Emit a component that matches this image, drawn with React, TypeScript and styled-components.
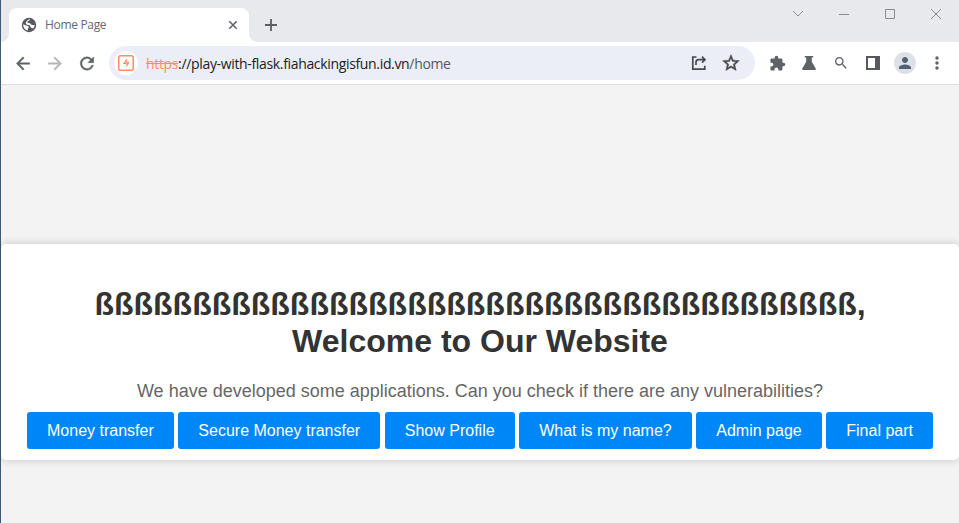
import React from 'react';
import styled, { createGlobalStyle } from 'styled-components';
import { MdArrowBack, MdArrowForward, MdRefresh, MdExtension, MdSearch, MdPerson, MdMoreVert, MdStarBorder } from 'react-icons/md';

const GlobalStyle = createGlobalStyle`
  * { box-sizing: border-box; }
  body { margin: 0; overflow: hidden; }
`;

const Window = styled.div`
  width: 100vw;
  height: 100vh;
  display: flex;
  flex-direction: column;
  border-left: 1px solid #3c5a78;
  background: #f3f3f3;
  font-family: 'Open Sans', 'Noto Sans', sans-serif;
`;

const TabStrip = styled.div`
  height: 42px;
  flex: none;
  display: flex;
  align-items: flex-end;
  padding-left: 8px;
  background: #e8e9ed;
`;

const Tab = styled.div`
  position: relative;
  width: 240px;
  height: 34px;
  display: flex;
  align-items: center;
  padding: 0 11px 0 12px;
  border-radius: 8px 8px 0 0;
  background: #fff;
  color: #5f6368;
  &::before, &::after {
    content: '';
    position: absolute;
    bottom: 0;
    width: 8px;
    height: 8px;
  }
  &::before { left: -8px; background: radial-gradient(circle at 0 0, transparent 7.5px, #fff 8px); }
  &::after { right: -8px; background: radial-gradient(circle at 100% 0, transparent 7.5px, #fff 8px); }
`;

const TabTitle = styled.span`
  flex: 1;
  margin-left: 8px;
  font-size: 12px;
  line-height: 16px;
  letter-spacing: -0.32px;
  color: #66696e;
`;

const NewTab = styled.div`
  display: flex;
  margin: 0 auto 11px 15px;
  color: #5a5d61;
`;

const WindowControls = styled.div`
  align-self: flex-start;
  display: flex;
  height: 28px;
  align-items: center;
  color: #888b90;
`;

const WindowButton = styled.div`
  width: 46px;
  display: flex;
  justify-content: center;
`;

const Toolbar = styled.div`
  height: 43px;
  flex: none;
  display: flex;
  align-items: center;
  padding-left: 12px;
  background: #fff;
  border-bottom: 1px solid #dadbdd;
`;

const ToolButton = styled.div<{ $color?: string; $bold?: boolean }>`
  width: 20px;
  height: 20px;
  margin-right: 12px;
  display: flex;
  flex: none;
  align-items: center;
  justify-content: center;
  color: ${p => p.$color ?? '#5f6368'};
  path:last-child { ${p => p.$bold ? 'stroke: currentColor; stroke-width: 0.5px;' : ''} }
`;

const AddressBar = styled.div`
  width: 646px;
  height: 34px;
  display: flex;
  align-items: center;
  margin-right: 12px;
  padding: 0 14px 0 5px;
  border-radius: 17px;
  background: #ebeef6;
`;

const SiteBadge = styled.div`
  width: 24px;
  height: 24px;
  display: flex;
  align-items: center;
  justify-content: center;
  border-radius: 50%;
  background: #fff;
`;

const Url = styled.div`
  flex: 1;
  margin-left: 8px;
  padding-top: 1px;
  font-size: 14px;
  line-height: 20px;
  letter-spacing: -0.34px;
  white-space: nowrap;
  color: #202124;
`;

const Scheme = styled.span`
  color: #ff8c6c;
  text-decoration: line-through;
`;

const UrlPath = styled.span`
  color: #55585d;
`;

const AddressActions = styled.div`
  display: flex;
  gap: 12px;
  color: #48494c;
  svg:last-child path:last-child { stroke: currentColor; stroke-width: 0.6px; }
`;

const Avatar = styled.div`
  width: 22px;
  height: 22px;
  margin: 0 11px 0 -1px;
  display: flex;
  align-items: center;
  justify-content: center;
  border-radius: 50%;
  background: #dde1e7;
  color: #526073;
`;

const Viewport = styled.main`
  flex: 1;
  min-height: 0;
  padding-top: 159px;
  font-family: 'Liberation Sans', Arial, sans-serif;
`;

const Card = styled.section`
  height: 216px;
  padding: 42px 20px 0;
  border-radius: 5px;
  background: #fff;
  box-shadow: 0 0 10px rgba(0, 0, 0, 0.2);
  text-align: center;
`;

const Heading = styled.h1`
  margin: 0 0 21px;
  font-size: 32px;
  line-height: 37px;
  color: #333;
`;

const Intro = styled.p`
  margin: 0 0 10px;
  font-size: 18px;
  line-height: 21px;
  color: #666;
`;

const Links = styled.nav`
  display: flex;
  justify-content: center;
  gap: 4.6px;
`;

const LinkButton = styled.a`
  padding: 10px 20px 9px;
  border-radius: 3px;
  background: #0087f7;
  color: #fff;
  font-size: 16px;
  line-height: 18px;
  white-space: nowrap;
`;

const links = ['Money transfer', 'Secure Money transfer', 'Show Profile', 'What is my name?', 'Admin page', 'Final part'];
const name = 'ß'.repeat(39);

const GlobeIcon = () => (
  <svg width="16" height="16" viewBox="0 0 16 16">
    <circle cx="8" cy="8" r="7.2" fill="#55585d" />
    <path d="M2.2 7.2 5 8.6c1.1.3 2.3.2 2.7 1.2.3 1-.7 1.2-.9 2.1v1.5C4 13 2.1 10.6 2.2 7.2ZM9 2.2c-.1 1-.8 1.6-1.7 1.7C6.2 4 6 5 6.6 5.6c.7.6 2 .2 2.6 1 .5.9 1.1 1.5 2.1 1.4.8-.1 1.4.1 2.3.3-.1 1.2-.6 2.3-1.3 3.1-.7-.5-1.9-.3-2.5-1-.6-.8-.3-1.7-1.2-2.2-.8-.4-2.3-.2-3.1-.8-1-.8-.9-2.3-.1-3C6.4 3.6 7 2.4 9 2.2Z" fill="#fff" />
  </svg>
);

const BurpIcon = () => (
  <svg width="16" height="16" viewBox="0 0 16 16">
    <rect x=".75" y=".75" width="14.5" height="14.5" rx="1.8" fill="none" stroke="#ff8c69" strokeWidth="1.5" />
    <path d="M8.8 3.2v3.6l2.7.2-3 5.8V9.2l-3.7-.3 4-5.7Z" fill="#ff8c69" />
    <path d="m7.3 7.4 1.6.9" stroke="#fff" strokeWidth=".8" />
  </svg>
);

const ShareIcon = () => (
  <svg width="20" height="20" viewBox="0 0 20 20" fill="none" stroke="currentColor" strokeWidth="1.7">
    <path d="M7.5 4H3.8v12.2h12v-3.4M7 12V9.2c0-1.7.8-2.5 2.5-2.5h6M13 3.7l3 3-3 3" />
  </svg>
);

const FlaskIcon = () => (
  <svg width="16" height="16" viewBox="0 0 16 16" fill="currentColor">
    <path d="M3.8 1h8.4v1.4h-1.4v4.3l3.9 6.9c.5.8.1 1.4-.8 1.4H2.1c-.9 0-1.3-.6-.8-1.4l3.9-6.9V2.4H3.8V1Z" />
  </svg>
);

const PanelIcon = () => (
  <svg width="16" height="16" viewBox="0 0 16 16">
    <path fillRule="evenodd" d="M1 1h14v14H1V1Zm2 2v10h7V3H3Z" fill="#55585d" />
  </svg>
);

export default function App() {
  return (
    <Window>
      <GlobalStyle />
      <TabStrip>
        <Tab>
          <GlobeIcon />
          <TabTitle>Home Page</TabTitle>
          <svg width="10" height="10" viewBox="0 0 10 10" stroke="currentColor" strokeWidth="1.6"><path d="m1.3 1.3 7.4 7.4m0-7.4L1.3 8.7" /></svg>
        </Tab>
        <NewTab>
          <svg width="14" height="12" viewBox="0 0 14 12" stroke="currentColor" strokeWidth="1.8"><path d="M1 6h12M7 0v12" /></svg>
        </NewTab>
        <WindowControls>
          <WindowButton><svg width="12" height="8" viewBox="0 0 12 8" fill="none" stroke="currentColor"><path d="m1 1 5 5 5-5" /></svg></WindowButton>
          <WindowButton><svg width="10" height="2" viewBox="0 0 10 2" stroke="currentColor"><path d="M0 1.5h10" /></svg></WindowButton>
          <WindowButton><svg width="10" height="10" viewBox="0 0 10 10" fill="none" stroke="currentColor"><path d="M.5.5h9v9h-9z" /></svg></WindowButton>
          <WindowButton><svg width="10" height="10" viewBox="0 0 10 10" stroke="currentColor"><path d="m0 0 10 10M10 0 0 10" /></svg></WindowButton>
        </WindowControls>
      </TabStrip>
      <Toolbar>
        <ToolButton $bold><MdArrowBack size={21} /></ToolButton>
        <ToolButton $bold $color="#b5b7b9"><MdArrowForward size={21} /></ToolButton>
        <ToolButton $bold><MdRefresh size={21} /></ToolButton>
        <AddressBar>
          <SiteBadge><BurpIcon /></SiteBadge>
          <Url><Scheme>https</Scheme>://play-with-flask.fiahackingisfun.id.vn<UrlPath>/home</UrlPath></Url>
          <AddressActions><ShareIcon /><MdStarBorder size={20} /></AddressActions>
        </AddressBar>
        <ToolButton><MdExtension size={17} /></ToolButton>
        <ToolButton><FlaskIcon /></ToolButton>
        <ToolButton><MdSearch size={16} /></ToolButton>
        <ToolButton><PanelIcon /></ToolButton>
        <Avatar><MdPerson size={18} /></Avatar>
        <ToolButton><MdMoreVert size={20} /></ToolButton>
      </Toolbar>
      <Viewport>
        <Card>
          <Heading>{name},<br />Welcome to Our Website</Heading>
          <Intro>We have developed some applications. Can you check if there are any vulnerabilities?</Intro>
          <Links>{links.map(label => <LinkButton key={label}>{label}</LinkButton>)}</Links>
        </Card>
      </Viewport>
    </Window>
  );
}
